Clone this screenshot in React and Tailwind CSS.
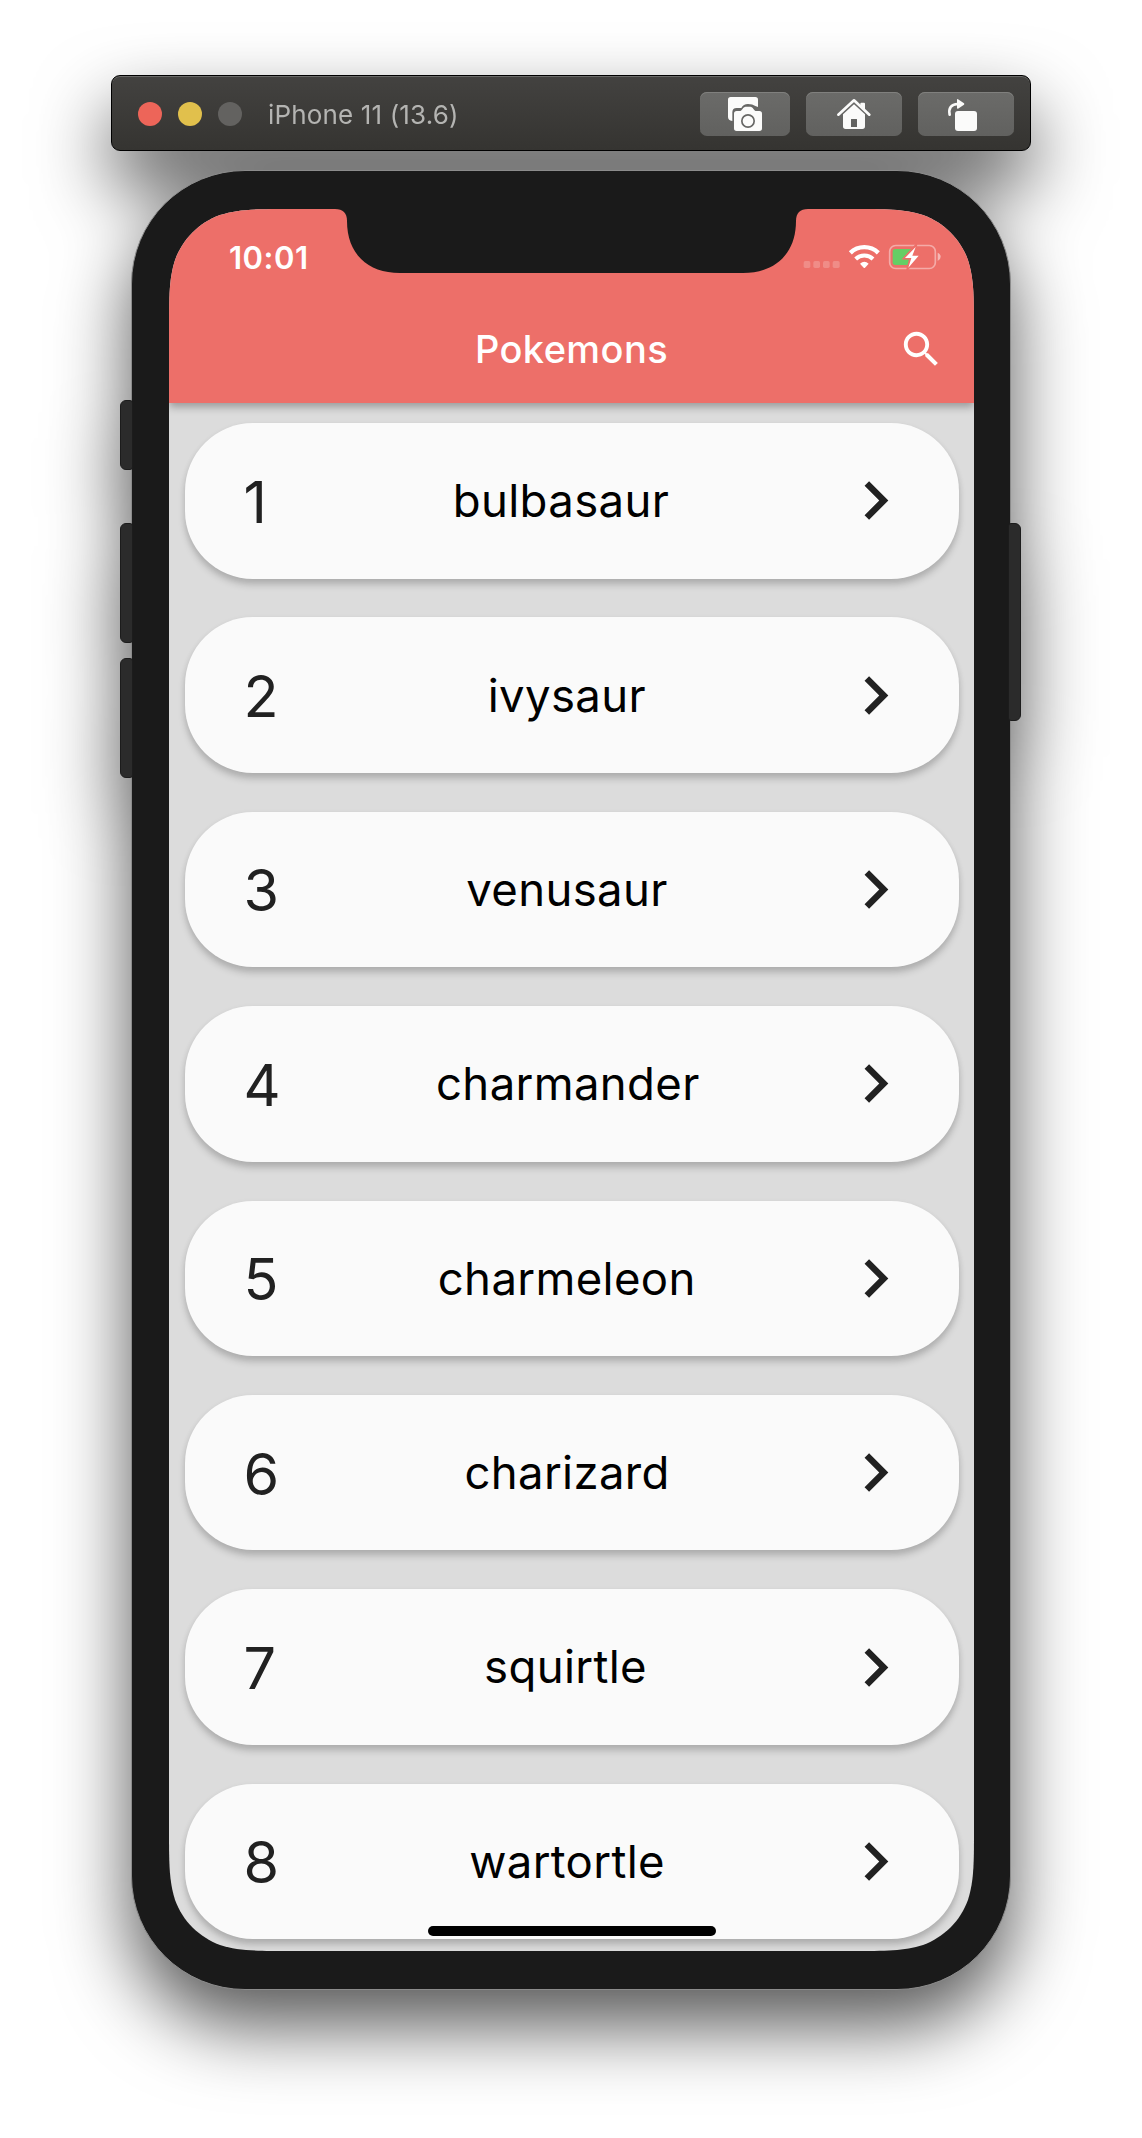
const POKEMONS = [
  { id: 1, name: 'bulbasaur' },
  { id: 2, name: 'ivysaur' },
  { id: 3, name: 'venusaur' },
  { id: 4, name: 'charmander' },
  { id: 5, name: 'charmeleon' },
  { id: 6, name: 'charizard' },
  { id: 7, name: 'squirtle' },
  { id: 8, name: 'wartortle' },
];

// Continuous ("squircle") corners for the display.
function squirclePath(w, h, r) {
  const corner = [
    [1.52866, 0],
    [1.08849, 0, 0.86841, 0, 0.63149, 0.07491],
    [0.37282, 0.16906, 0.16906, 0.37282, 0.07491, 0.63149],
    [0, 0.86841, 0, 1.08849, 0, 1.52866],
  ];
  const rev = [
    [0, 1.52866],
    [0, 1.08849, 0, 0.86841, 0.07491, 0.63149],
    [0.16906, 0.37282, 0.37282, 0.16906, 0.63149, 0.07491],
    [0.86841, 0, 1.08849, 0, 1.52866, 0],
  ];
  const draw = (segs, fx, fy) =>
    segs
      .map((s, i) => {
        const pts = s.map((v, j) => (j % 2 === 0 ? fx(v * r) : fy(v * r)).toFixed(2));
        return (i === 0 ? 'L' : 'C') + pts.join(' ');
      })
      .join(' ');
  const l = (v) => v;
  const rx = (v) => w - v;
  const by = (v) => h - v;
  return (
    `M${w / 2} 0 ` +
    draw(corner, rx, l).concat(' ') +
    draw(rev, rx, by).concat(' ') +
    draw(corner, l, by).concat(' ') +
    draw(rev, l, l) +
    ' Z'
  );
}

function TitleBar() {
  const button =
    'h-11 rounded-[7px] bg-linear-to-b from-[#6b6b69] to-[#61615f] shadow-[inset_0_1px_0_#80807e]';
  return (
    <div className="relative z-10 mx-auto flex h-19 w-[920px] items-center rounded-[9px] border border-black bg-linear-to-b from-[#434240] to-[#353431] pt-[2px] pr-4 pl-[26px] shadow-[inset_0_1px_0_#6a6a68]">
      <div className="flex gap-4">
        <span className="size-6 rounded-full bg-[#ed6559]" />
        <span className="size-6 rounded-full bg-[#e1c04c]" />
        <span className="size-6 rounded-full bg-[#636260]" />
      </div>
      <span className="ml-[26px] text-[26px] tracking-[0.15px] whitespace-nowrap text-[#b4b4b2]">
        iPhone 11 (13.6)
      </span>
      <div className="ml-auto flex gap-4">
        <div className={`${button} w-[90px]`}>
          <svg viewBox="60 96 270 132" className="h-11 w-[90px]">
            <path
              fill="#fbfbfa"
              d="M152 111h74q8 0 8 8v22l-8-3q-8-6-22-6t-20 12h-14q-13 0-13 13v26q-13-1-13-12v-52q0-8 8-8z"
            />
            <path
              fill="#fbfbfa"
              stroke="#686866"
              strokeWidth="5"
              paintOrder="stroke"
              d="M170 153h9c7 0 10-13 18-13h14c8 0 11 13 18 13h9q8 0 8 8v44q0 8-8 8h-68q-8 0-8-8v-44q0-8 8-8z"
            />
            <circle cx="204" cy="183" r="18.5" fill="none" stroke="#666664" strokeWidth="5" />
          </svg>
        </div>
        <div className={`${button} w-24`}>
          <svg viewBox="378 96 288 132" className="h-11 w-24">
            <path
              d="M475 164 522 121l46 43"
              fill="none"
              stroke="#fbfbfa"
              strokeWidth="8"
              strokeLinecap="round"
              strokeLinejoin="round"
            />
            <path fill="#fbfbfa" d="M541 132v-1q0-3 3-3h8q3 0 3 3v20l-14-13z" />
            <path
              fill="#fbfbfa"
              fillRule="evenodd"
              d="M489 163l33-30 33 30v36q0 8-8 8h-50q-8 0-8-8zM513 178v23h18v-23q0-1-1-1h-16q-1 0-1 1z"
            />
          </svg>
        </div>
        <div className={`${button} w-24`}>
          <svg viewBox="714 96 288 132" className="h-11 w-24">
            <path
              d="M809 164c-4-18 4-32 24-32"
              fill="none"
              stroke="#fbfbfa"
              strokeWidth="8"
              strokeLinecap="round"
            />
            <path fill="#fbfbfa" d="M831 119q0-3 3-1l18 12q2 2 0 4l-18 12q-3 1-3-2z" />
            <rect x="825" y="153" width="66" height="60" rx="9" fill="#fbfbfa" />
          </svg>
        </div>
      </div>
    </div>
  );
}

function Notch() {
  return (
    <svg viewBox="0 0 473 65" className="absolute top-0 left-[166px] h-[65px] w-[473px]">
      <path
        fill="#1a1a1a"
        d="M0 0C8 0 12 4 12 12C12 44 32 64 65 64H408C441 64 461 44 461 12C461 4 465 0 473 0V-2H0Z"
      />
    </svg>
  );
}

function StatusIcons() {
  return (
    <svg viewBox="370 550 420 84" className="h-7 w-[140px]">
      <g fill="#fff" opacity=".2">
        <rect x="372" y="604" width="20" height="21" rx="5" />
        <rect x="401" y="604" width="20" height="21" rx="5" />
        <rect x="430" y="604" width="20" height="21" rx="5" />
        <rect x="459" y="604" width="21" height="21" rx="5" />
      </g>
      <path d="M512 579.500a60 60 0 0 1 84 0" fill="none" stroke="#fff" strokeWidth="13" />
      <path d="M528 598a37 37 0 0 1 52 0" fill="none" stroke="#fff" strokeWidth="12" />
      <path d="M541 612q13-11 26 0l-11 12q-2 2-4 0z" fill="#fff" />
      <rect
        x="630"
        y="557.5"
        width="137"
        height="69"
        rx="18"
        fill="none"
        stroke="#fff"
        strokeOpacity=".42"
        strokeWidth="5"
      />
      <path d="M774 579q9 4 9 12.500t-9 12.500z" fill="#fff" opacity=".5" />
      <path d="M647 568h48l-20 31h18l-6 17h-40q-8 0-8-8v-32q0-8 8-8z" fill="#65ce65" />
      <path
        d="M711 553l-40 44h20l-9 34 38-45h-20l11-33z"
        fill="#ed6f69"
        stroke="#ed6f69"
        strokeWidth="5"
      />
      <path d="M708 562l-32 33h19l-9 29 31-36h-19z" fill="#fff" />
    </svg>
  );
}

function PokemonCard({ id, name }) {
  return (
    <div className="flex h-[155.5px] shrink-0 items-center justify-between rounded-[68px] bg-[#fafafa] pr-[44.5px] pl-[59px] shadow-[0_6px_7px_rgba(0,0,0,0.17),0_2px_6px_rgba(0,0,0,0.07)]">
      <span className="pt-[2px] pr-[18px] text-[57.5px] whitespace-nowrap text-[#212121]">{id}</span>
      <span className="pt-px text-[45.5px] tracking-[0.35px] text-black">{name}</span>
      <svg viewBox="0 0 24 24" className="size-[77px]" fill="#212121">
        <path d="M10 6L8.590 7.410 13.170 12l-4.580 4.590L10 18l6-6z" />
      </svg>
    </div>
  );
}

function Phone() {
  const key = 'absolute w-[13px] border border-[#1c1c1c] bg-[#2b2b2b]';
  return (
    <div className="relative mx-auto mt-[19px] h-[1820px] w-[880px]">
      <div className="h-full rounded-[114px] border border-[#8c8c8c] bg-[#1a1a1a] pt-[38px] pr-9 pb-[38px] pl-[37px]">
        <div
          className="relative flex h-[1742px] w-[805px] flex-col bg-[#dcdcdc]"
          style={{ clipPath: `path('${squirclePath(805, 1742, 80.7)}')` }}
        >
          <header className="relative z-10 h-[194px] shrink-0 bg-[#ed6f69] shadow-[0_4px_8px_rgba(0,0,0,0.3)]">
            <Notch />
            <div className="flex h-[86px] items-center justify-between pt-[10px] pr-[31px] pl-[60px]">
              <span className="pt-[2px] text-[31px] font-semibold tracking-[0.5px] text-white">
                10:01
              </span>
              <StatusIcons />
            </div>
            <div className="grid h-[108px] grid-cols-[76px_1fr_76px] items-center">
              <span />
              <h1 className="text-center text-[38px] font-medium tracking-[0.4px] text-white">
                Pokemons
              </h1>
              <svg viewBox="0 0 24 24" className="size-[46.7px]" fill="#fff">
                <path d="M15.500 14h-.79l-.28-.27C15.410 12.590 16 11.110 16 9.500 16 5.910 13.090 3 9.500 3S3 5.910 3 9.500 5.910 16 9.500 16c1.610 0 3.090-.59 4.230-1.570l.27.28v.79l5 4.990L20.490 19l-4.990-5zm-6 0C7.010 14 5 11.990 5 9.500S7.010 5 9.500 5 14 7.010 14 9.500 11.990 14 9.500 14z" />
              </svg>
            </div>
          </header>
          <main className="flex flex-col gap-[38.9px] px-[15.5px] pt-[20px]">
            {POKEMONS.map((p) => (
              <PokemonCard key={p.id} {...p} />
            ))}
          </main>
          <div className="absolute bottom-[15.5px] left-[258.5px] h-[10px] w-[288px] rounded-full bg-black" />
        </div>
      </div>
      <span className={`${key} top-[230px] -left-[11px] h-[70px] rounded-l-[6px] rounded-r-[3px]`} />
      <span className={`${key} top-[353px] -left-[11px] h-[120px] rounded-l-[6px] rounded-r-[3px]`} />
      <span className={`${key} top-[488px] -left-[11px] h-[120px] rounded-l-[6px] rounded-r-[3px]`} />
      <span className={`${key} top-[353px] -right-[10px] h-[198px] rounded-l-[3px] rounded-r-[6px]`} />
    </div>
  );
}

export default function App() {
  return (
    <div className="h-[2138px] w-[1142px] overflow-hidden bg-white pt-[75px] font-['Inter',sans-serif]">
      <div className="drop-shadow-[0_36px_37px_rgba(0,0,0,0.66)]">
        <TitleBar />
        <Phone />
      </div>
    </div>
  );
}
